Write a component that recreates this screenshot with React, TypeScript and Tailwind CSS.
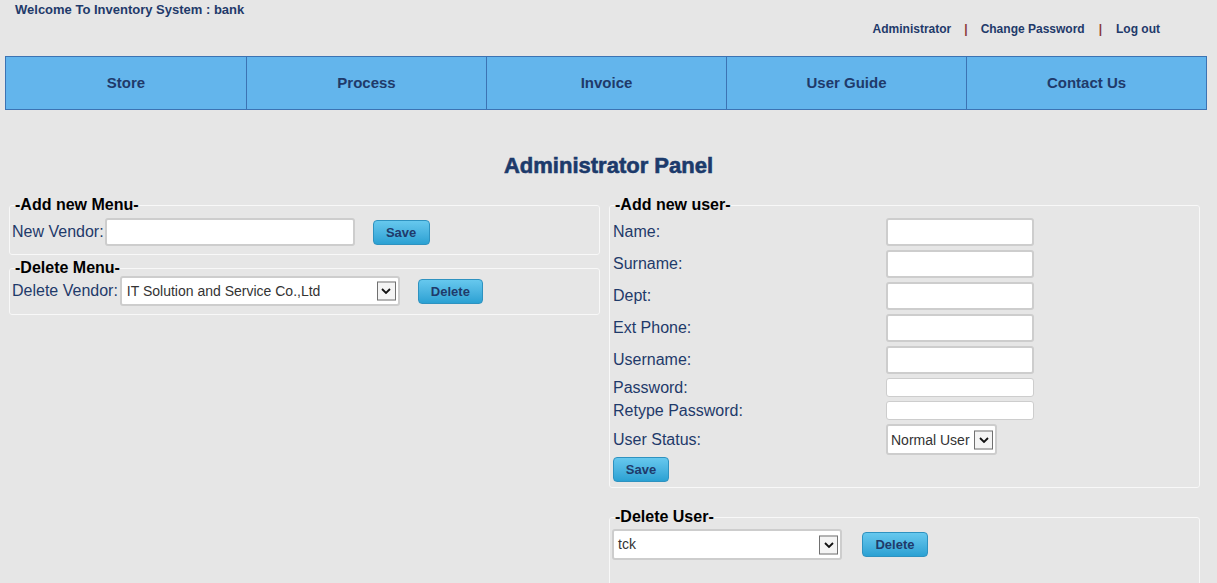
import React from 'react';

const navItems = ['Store', 'Process', 'Invoice', 'User Guide', 'Contact Us'];

const Chevron = () => (
  <span className="absolute right-[2px] top-1/2 -translate-y-1/2 flex h-[19px] w-[19px] items-center justify-center border border-[#707070] bg-[#f4f4f4]">
    <svg width="10" height="7" viewBox="0 0 10 7">
      <path d="M1 1.5 L5 5.5 L9 1.5" fill="none" stroke="#111" strokeWidth="1.8" />
    </svg>
  </span>
);

const Btn = ({ children, className = '' }: { children: React.ReactNode; className?: string }) => (
  <button
    type="button"
    className={`rounded-[4px] border border-[#2e92c0] bg-gradient-to-b from-[#66c8ee] to-[#2aa1d3] text-[13px] font-bold text-[#1f3a6a] leading-none ${className}`}
  >
    {children}
  </button>
);

const TextBox = ({ className = '' }: { className?: string }) => (
  <input
    type="text"
    className={`rounded-[3px] border-[#cdcdcd] bg-white outline-none ${className}`}
  />
);

const SelectBox = ({ value, className = '' }: { value: string; className?: string }) => (
  <div
    className={`relative flex items-center rounded-[3px] border-2 border-[#cdcdcd] bg-white text-[14px] text-[#333] ${className}`}
  >
    {value}
    <Chevron />
  </div>
);

const userRows = [
  { label: 'Name:', tall: true },
  { label: 'Surname:', tall: true },
  { label: 'Dept:', tall: true },
  { label: 'Ext Phone:', tall: true },
  { label: 'Username:', tall: true },
  { label: 'Password:', tall: false },
  { label: 'Retype Password:', tall: false },
];

export default function App() {
  return (
    <div className="min-h-screen bg-[#e6e6e6] font-['Liberation_Sans',Arial,sans-serif] text-[#1f3a6a]">
      <div className="pl-[15px] pt-[2px] text-[13px] font-bold leading-[16px]">
        Welcome To Inventory System : bank
      </div>
      <div className="mt-[4px] flex justify-end pr-[57px] text-[12px] font-bold leading-[14px]">
        <span>Administrator</span>
        <span className="mx-[13px] text-[#8a3a3a]">|</span>
        <span>Change Password</span>
        <span className="mx-[14px] text-[#8a3a3a]">|</span>
        <span>Log out</span>
      </div>

      <nav className="ml-[5px] mt-[20px] grid h-[54px] w-[1202px] grid-cols-5 border border-[#3c73b3] bg-[#63b5ec]">
        {navItems.map((item, i) => (
          <div
            key={item}
            className={`flex items-center justify-center text-[15px] font-bold ${i > 0 ? 'border-l border-[#3c73b3]' : ''}`}
          >
            {item}
          </div>
        ))}
      </nav>

      <h1 className="mt-[44px] text-center text-[22px] font-bold leading-[24px] text-[#1c3a6b] [-webkit-text-stroke:0.6px_#1c3a6b]">
        Administrator Panel
      </h1>

      <div className="ml-[9px] mt-[18px] flex gap-[9px]">
        <div className="flex w-[591px] flex-col gap-[4px]">
          <fieldset className="h-[59px] rounded-[3px] border border-[#f8f8f8] px-[2px]">
            <legend className="ml-[3px] text-[16px] font-bold leading-[18px] text-black">-Add new Menu-</legend>
            <div className="mt-[4px] flex items-center text-[16px]">
              <span>New Vendor:</span>
              <TextBox className="ml-[1px] h-[28px] w-[250px] border-2" />
              <Btn className="ml-[18px] h-[25px] w-[57px]">Save</Btn>
            </div>
          </fieldset>
          <fieldset className="h-[56px] rounded-[3px] border border-[#f8f8f8] px-[2px]">
            <legend className="ml-[3px] text-[16px] font-bold leading-[18px] text-black">-Delete Menu-</legend>
            <div className="mt-[-1px] flex items-center text-[16px]">
              <span>Delete Vendor:</span>
              <SelectBox value="IT Solution and Service Co.,Ltd" className="ml-[2px] h-[30px] w-[280px] pl-[5px]" />
              <Btn className="ml-[18px] h-[25px] w-[65px]">Delete</Btn>
            </div>
          </fieldset>
        </div>

        <div className="flex w-[591px] flex-col">
          <fieldset className="h-[292px] rounded-[3px] border border-[#f8f8f8] px-[3px]">
            <legend className="ml-[2px] text-[16px] font-bold leading-[18px] text-black">-Add new user-</legend>
            <div className="mt-[4px] grid grid-cols-[273px_148px] items-center gap-y-[4px] text-[16px] leading-[18px]">
              {userRows.map((r) => (
                <React.Fragment key={r.label}>
                  <span>{r.label}</span>
                  <TextBox className={r.tall ? 'h-[28px] w-[148px] border-2' : 'h-[19px] w-[148px] border'} />
                </React.Fragment>
              ))}
              <span>User Status:</span>
              <SelectBox value="Normal User" className="h-[31px] w-[111px] pl-[3px] text-[13.5px]" />
            </div>
            <Btn className="mt-[2px] h-[25px] w-[56px]">Save</Btn>
          </fieldset>

          <fieldset className="mt-[20px] h-[80px] rounded-[3px] border border-[#f8f8f8] px-[2px]">
            <legend className="ml-[3px] text-[16px] font-bold leading-[18px] text-black">-Delete User-</legend>
            <div className="mt-[3px] flex items-center">
              <SelectBox value="tck" className="h-[31px] w-[230px] pl-[4px]" />
              <Btn className="ml-[20px] h-[25px] w-[66px]">Delete</Btn>
            </div>
          </fieldset>
        </div>
      </div>
    </div>
  );
}
